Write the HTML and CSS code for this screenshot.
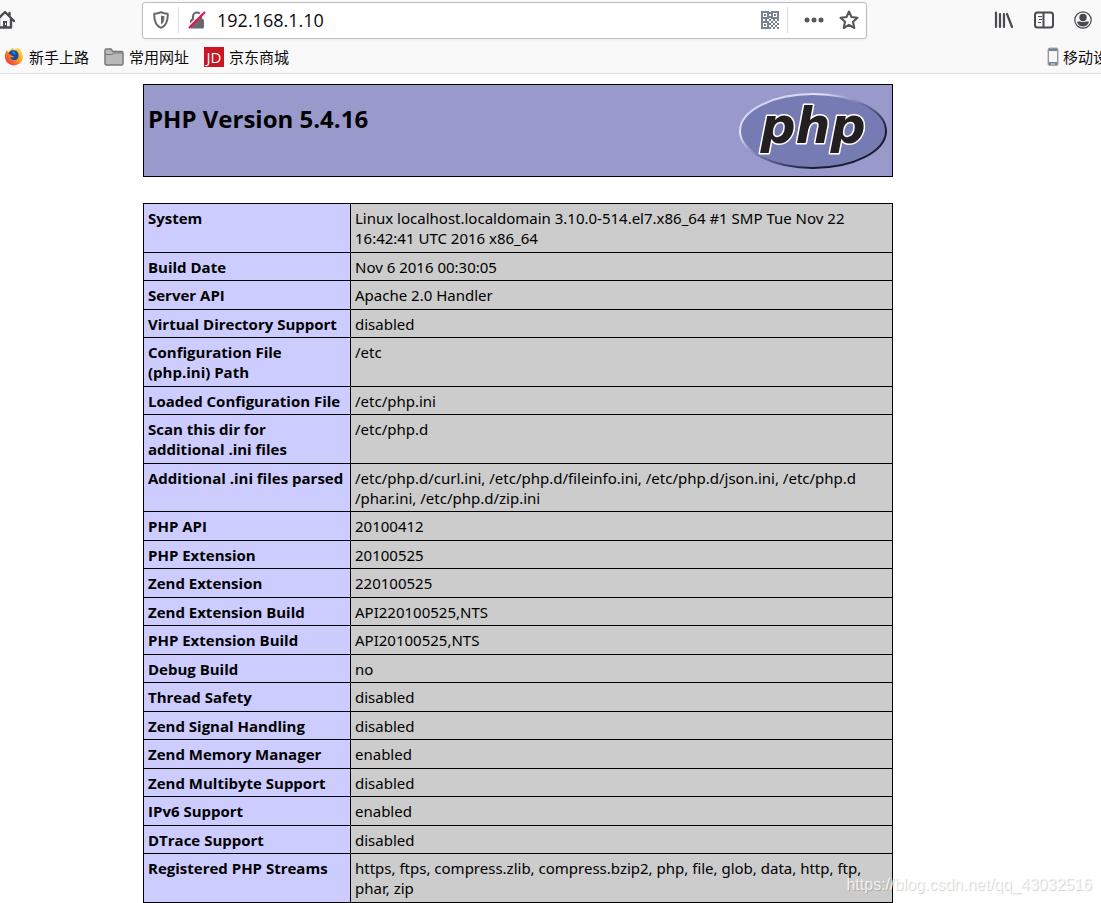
FILE: index.html
```html
<!DOCTYPE html>
<html lang="zh-CN">
<head>
<meta charset="utf-8">
<title>phpinfo()</title>
<link rel="stylesheet" href="styles.css">
</head>
<body>
<header class="chrome">
  <div class="toolbar">
    <button class="icon-button home" aria-label="Home"><svg width="20" height="20" viewBox="0 0 20 20"><path d="M1 11 L10 2 L19 11 M4 9V17.500H16V9 M14.500 6V3" fill="none" stroke="#4a4a4f" stroke-width="2.400" stroke-linejoin="round" stroke-linecap="round"/><path d="M8 11h4v7H8z" fill="#4a4a4f"/><path d="M10 13h1v2h-1z" fill="#fff"/></svg></button>
    <div class="urlbar">
      <button class="icon-button" aria-label="Tracking protection"><svg width="16" height="18" viewBox="0 0 16 18"><path d="M8 1.200C10 2 12.500 2.500 14.700 2.700C15 9 13.500 14.500 8 16.800C2.500 14.500 1 9 1.300 2.700C3.500 2.500 6 2 8 1.200Z" fill="none" stroke="#69696d" stroke-width="2" stroke-linejoin="round"/><path d="M8 4.500V13.500C5.500 12 4.500 9.500 4.500 5.200Z" fill="#69696d" transform="matrix(-1 0 0 1 16 0)"/></svg></button>
      <span class="divider"></span>
      <button class="icon-button" aria-label="Connection not secure"><svg width="18" height="18" viewBox="0 0 18 18"><path d="M5 9V5.500a4 4 0 0 1 8 0V9" fill="none" stroke="#69696d" stroke-width="2.200"/><rect x="2" y="8" width="14" height="9.500" rx="1.500" fill="#69696d"/><path d="M0 15.500 15.500 0" stroke="#fff" stroke-width="1.500"/><path d="M1 17 17 1" stroke="#f0134b" stroke-width="2.200"/></svg></button>
      <input class="address" type="text" value="192.168.1.10" aria-label="Address">
      <button class="icon-button" aria-label="QR code"><svg width="18" height="18" viewBox="0 0 18 18" fill="none" stroke="#788391" stroke-width="2"><path d="M1 1h6v6H1zM11 1h6v6h-6zM1 11h6v6H1z"/><path d="M3 4h2M13 4h2M3 14h2" /><path d="M8 2h2M8 6h2M8 9h2M0 9h2M4 9h2M12 9h2M16 9h2M10 11h2M14 11h2M8 13h2M12 13h2M16 13h2M10 15h2M14 15h2M8 17h2M12 17h2M16 17h2"/></svg></button>
      <span class="divider divider-right"></span>
      <button class="icon-button dots" aria-label="Page actions"><svg width="20" height="6" viewBox="0 0 20 6" fill="#58585c"><circle cx="3" cy="3" r="2.500"/><circle cx="10" cy="3" r="2.500"/><circle cx="17" cy="3" r="2.500"/></svg></button>
      <button class="icon-button" aria-label="Bookmark this page"><svg width="20" height="20" viewBox="0 0 20 20"><path d="M10 1.500 12.500 7 18.500 7.700 14 11.800 15.300 18 10 14.800 4.700 18 6 11.800 1.500 7.700 7.500 7Z" fill="none" stroke="#58585c" stroke-width="2.100" stroke-linejoin="round"/></svg></button>
    </div>
    <div class="tools">
      <button class="icon-button" aria-label="Library"><svg width="20" height="18" viewBox="0 0 20 18" fill="none" stroke="#4a4a4f" stroke-width="2.200" stroke-linecap="round"><path d="M2 1.500V16M6 3V16M10 3V16M13 3 18 16"/></svg></button>
      <button class="icon-button" aria-label="Sidebars"><svg width="20" height="18" viewBox="0 0 20 18" fill="none" stroke="#4a4a4f"><rect x="1" y="1.500" width="18" height="15" rx="2.500" stroke-width="2"/><path d="M9.500 2V16" stroke-width="2"/><path d="M4 5.500h4M5 8.500h3M4 11.500h3" stroke-width="1"/></svg></button>
      <button class="icon-button" aria-label="Account"><svg width="18" height="18" viewBox="0 0 18 18"><circle cx="9" cy="9" r="8.200" fill="none" stroke="#4a4a4f" stroke-width="1.200"/><circle cx="9" cy="6.500" r="3.700" fill="#4a4a4f"/><path d="M3 11c2-1 3.500 0 6 0s4-1 6 0c-1 3-3.500 4.500-6 4.500S4 14 3 11Z" fill="#4a4a4f"/></svg></button>
    </div>
  </div>
  <nav class="bookmarks">
    <a class="bookmark" href="#start"><svg width="20" height="20" viewBox="0 0 20 20"><defs><linearGradient id="fox" x1="1" y1="0" x2="0" y2="1"><stop offset="0" stop-color="#fff04a"/><stop offset=".45" stop-color="#ff9a16"/><stop offset="1" stop-color="#ed174f"/></linearGradient></defs><path d="M3 3 4 5.500C6 3 7 2 9 1L10 3 14 1C17 3 19 7 18.800 11A9 8.800 0 0 1 1 11C.8 8 1.200 5 3 3Z" fill="url(#fox)"/><path d="M8 3.500c3-1 6 .5 6.500 4 .5 4-2 6-5 5.500-2-.3-3-1.500-3-3 1.500 1 3 .5 4-.5-2 0-3-1-4-2L4.500 7C5 5 6 4 8 3.500Z" fill="#174a9c"/><path d="M9 4c2 .5 3 2 2.500 4L8 6Z" fill="#0a84ff"/></svg><span>新手上路</span></a>
    <a class="bookmark" href="#common"><svg width="20" height="18" viewBox="0 0 20 18"><path d="M1 15V2.500Q1 1 2.500 1H7l2 2.500h8.500Q19 3.500 19 5V15.500Q19 17 17.500 17h-15Q1 17 1 15Z" fill="#b9b9b9" stroke="#77777a" stroke-width="1.500"/><path d="M2 6.500H8L10 5h8" fill="none" stroke="#77777a"/></svg><span>常用网址</span></a>
    <a class="bookmark" href="#jd"><svg width="20" height="20" viewBox="0 0 20 20"><path d="M0 0h20v20H0z" fill="#c91623"/><text class="jd" x="10" y="16" text-anchor="middle">JD</text></svg><span>京东商城</span></a>
    <a class="bookmark mobile" href="#mobile"><svg width="12" height="20" viewBox="0 0 12 20"><rect x="1" y="1" width="10" height="17.500" rx="1.500" fill="#788391" stroke="#a5abb3"/><path d="M2 4h8v11H2z" fill="#f7f7f7"/><path d="M4 17h4" stroke="#ddd"/></svg><span>移动设</span></a>
  </nav>
</header>
<main class="page">
  <section class="banner">
    <h1>PHP Version 5.4.16</h1>
    <svg class="logo" width="150" height="80" viewBox="0 0 150 80" role="img" aria-label="PHP logo">
      <defs><linearGradient id="rim" x1="0" y1="0" x2="1" y2="1"><stop offset="0" stop-color="#c5c7ee"/><stop offset=".28" stop-color="#e0e1fa"/><stop offset=".48" stop-color="#7175aa"/><stop offset=".75" stop-color="#191a2a"/><stop offset="1" stop-color="#222338"/></linearGradient></defs>
      <ellipse cx="75" cy="40" rx="73" ry="37" fill="#777bb4" stroke="url(#rim)" stroke-width="2"/>
      <text class="logo-text" x="75" y="52" text-anchor="middle">php</text>
    </svg>
  </section>
  <table class="info">
    <colgroup><col class="key-column"><col></colgroup>
    <tbody>
    <tr><th scope="row">System</th><td>Linux localhost.localdomain 3.10.0-514.el7.x86_64 #1 SMP Tue Nov 22<br>16:42:41 UTC 2016 x86_64</td></tr>
    <tr><th scope="row">Build Date</th><td>Nov 6 2016 00:30:05</td></tr>
    <tr><th scope="row">Server API</th><td>Apache 2.0 Handler</td></tr>
    <tr><th scope="row">Virtual Directory Support</th><td>disabled</td></tr>
    <tr><th scope="row">Configuration File<br>(php.ini) Path</th><td>/etc</td></tr>
    <tr><th scope="row">Loaded Configuration File</th><td>/etc/php.ini</td></tr>
    <tr><th scope="row">Scan this dir for<br>additional .ini files</th><td>/etc/php.d</td></tr>
    <tr><th scope="row">Additional .ini files parsed</th><td>/etc/php.d/curl.ini, /etc/php.d/fileinfo.ini, /etc/php.d/json.ini, /etc/php.d<br>/phar.ini, /etc/php.d/zip.ini</td></tr>
    <tr><th scope="row">PHP API</th><td>20100412</td></tr>
    <tr><th scope="row">PHP Extension</th><td>20100525</td></tr>
    <tr><th scope="row">Zend Extension</th><td>220100525</td></tr>
    <tr><th scope="row">Zend Extension Build</th><td>API220100525,NTS</td></tr>
    <tr><th scope="row">PHP Extension Build</th><td>API20100525,NTS</td></tr>
    <tr><th scope="row">Debug Build</th><td>no</td></tr>
    <tr><th scope="row">Thread Safety</th><td>disabled</td></tr>
    <tr><th scope="row">Zend Signal Handling</th><td>disabled</td></tr>
    <tr><th scope="row">Zend Memory Manager</th><td>enabled</td></tr>
    <tr><th scope="row">Zend Multibyte Support</th><td>disabled</td></tr>
    <tr><th scope="row">IPv6 Support</th><td>enabled</td></tr>
    <tr><th scope="row">DTrace Support</th><td>disabled</td></tr>
    <tr><th scope="row">Registered PHP Streams</th><td>https, ftps, compress.zlib, compress.bzip2, php, file, glob, data, http, ftp,<br>phar, zip</td></tr>
    </tbody>
  </table>
</main>
<div class="watermark">https://blog.csdn.net/qq_43032516</div>
</body>
</html>
```
FILE: styles.css
```css
* { box-sizing: border-box; }
body {
  position: relative;
  margin: 0;
  overflow-x: hidden;
  background: #fff;
  color: #000;
  font: 15px/20px "Open Sans", "Noto Sans CJK SC", sans-serif;
}
.chrome {
  height: 74px;
  background: #f9f9fa;
  border-bottom: 1px solid #e0e0e1;
}
.toolbar {
  display: flex;
  align-items: center;
  height: 40px;
  padding-right: 9px;
}
.icon-button {
  display: flex;
  flex: none;
  padding: 0;
  border: 0;
  background: none;
}
.home { margin-left: -5px; }
.urlbar {
  display: flex;
  flex: 1;
  align-items: center;
  height: 37px;
  margin: 0 127px;
  padding: 0 7px 0 10px;
  border: 1px solid #bcbcbe;
  border-radius: 3px;
  background: #fff;
  box-shadow: 0 1px 3px #0000000d;
}
.divider {
  width: 1px;
  height: 26px;
  margin: 0 9px;
  background: #dedee0;
}
.divider-right { margin: 0 16px 0 8px; }
.dots { margin-right: 15px; }
.address {
  flex: 1;
  min-width: 0;
  height: 30px;
  margin: 0 11px;
  padding: 0;
  border: 0;
  outline: 0;
  background: none;
  color: #0c0c0d;
  font: 18px/24px "Open Sans", sans-serif;
}
.tools {
  display: flex;
  align-items: center;
  gap: 20px;
}
.bookmarks {
  display: flex;
  align-items: center;
  height: 33px;
  padding-left: 4px;
  gap: 15px;
}
.bookmark {
  display: flex;
  flex: none;
  align-items: center;
  gap: 5px;
  color: #0c0c0d;
  text-decoration: none;
  white-space: nowrap;
}
.bookmark svg { flex: none; }
.jd { fill: #fff; font: 15px "Open Sans", sans-serif; }
.mobile {
  flex: 0 0 54px;
  gap: 4px;
  margin-left: auto;
  overflow: hidden;
}
.page { padding: 10px 208px 0 143px; }
.banner {
  display: flex;
  justify-content: space-between;
  height: 93px;
  margin-bottom: 26px;
  padding: 6px 4px;
  border: 1px solid #000;
  background: #9999cc;
}
h1 {
  margin: 12px 0 0;
  font-size: 24px;
  line-height: 32px;
  white-space: nowrap;
}
.logo { flex: none; }
.logo-text {
  fill: #231f20;
  stroke: #fff;
  stroke-width: 3px;
  stroke-linejoin: round;
  paint-order: stroke;
  font: italic 700 49px "DejaVu Sans", sans-serif;
}
.info {
  width: 100%;
  border-collapse: collapse;
  table-layout: fixed;
}
.key-column { width: 207px; }
th, td {
  padding: 4px;
  border: 1px solid #000;
  vertical-align: top;
  white-space: nowrap;
}
th { background: #ccccff; text-align: left; font-weight: 700; }
td { background: #cccccc; font-family: "Noto Sans", sans-serif; }
tr:nth-child(even) > * { padding-bottom: 3px; }
.watermark {
  position: absolute;
  right: 9px;
  bottom: 8px;
  color: #ffffffcc;
  font: 16px/20px "Liberation Sans", sans-serif;
  text-shadow: 1px 1px 1px #00000030;
}
```
